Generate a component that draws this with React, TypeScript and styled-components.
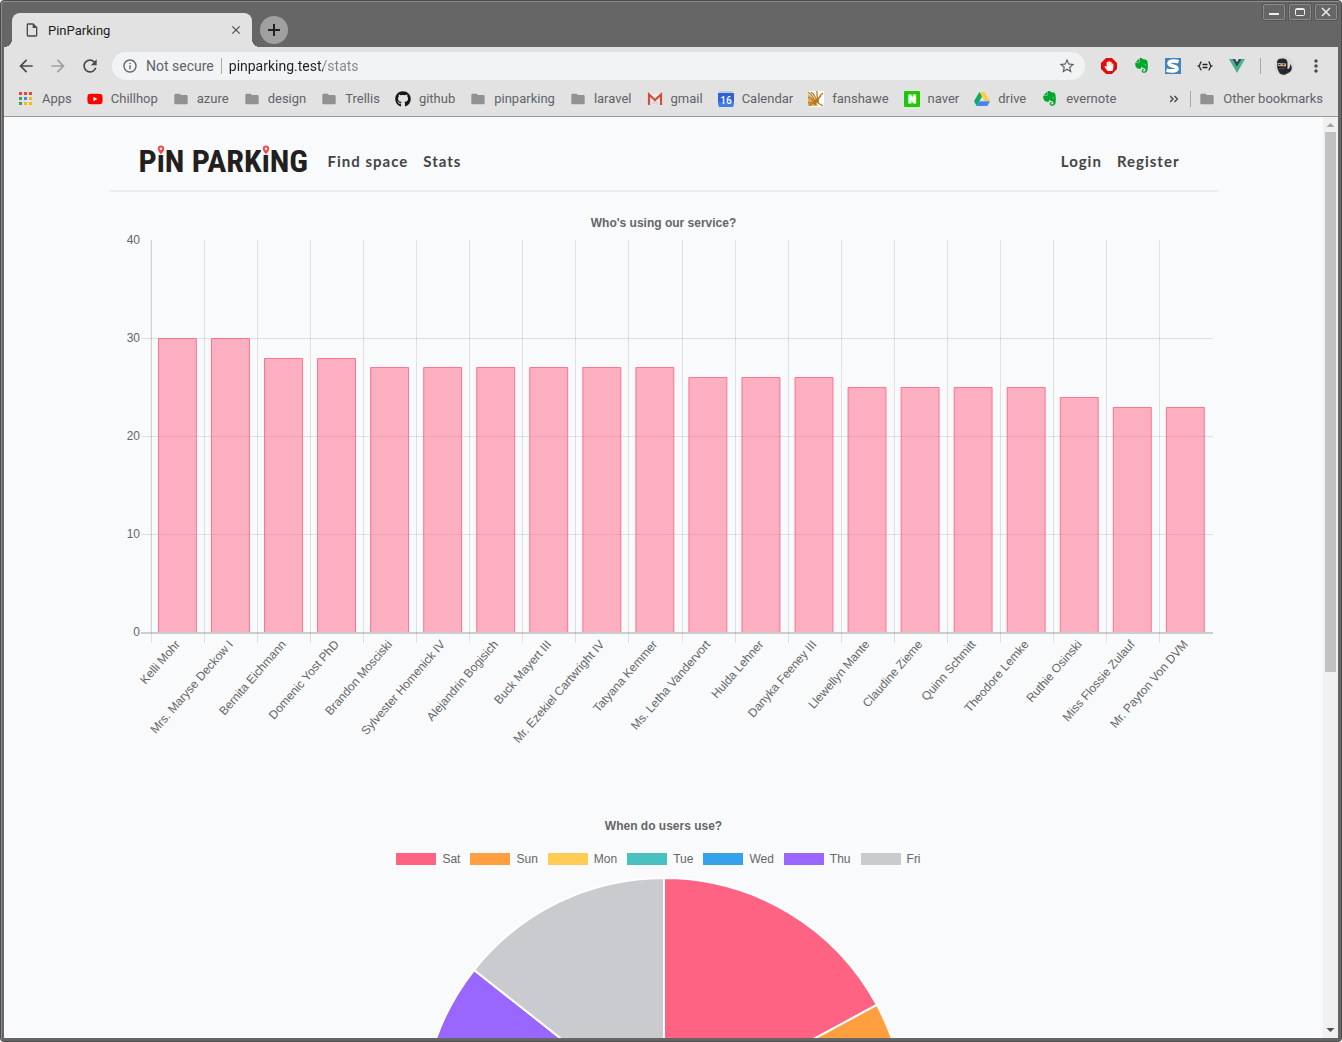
import React from "react";
import styled, { createGlobalStyle } from "styled-components";
import {
  MdArrowBack,
  MdArrowForward,
  MdRefresh,
  MdInfoOutline,
  MdStarBorder,
  MdMoreVert,
  MdFolder,
  MdClose,
  MdOutlineInsertDriveFile,
} from "react-icons/md";
import { FaYoutube, FaGithub, FaEvernote, FaHandPaper } from "react-icons/fa";

const GlobalStyle = createGlobalStyle`
  * { box-sizing: border-box; }
  html, body { margin: 0; background: #fff; }
  body { font-family: Roboto, "Liberation Sans", sans-serif; overflow: hidden; }
  button { border: 0; padding: 0; margin: 0; background: none; font: inherit; color: inherit; }
  a { color: inherit; text-decoration: none; }
  svg { display: block; flex: none; }
`;

/* ---------- window ---------- */

const Window = styled.div`
  height: 100vh;
  display: flex;
  flex-direction: column;
  padding: 3px;
  background: #666;
  border: 1px solid #4c4c4c;
  border-radius: 4px;
  box-shadow: inset 1px 1px 0 #8c8c8c;
`;

const TitleBar = styled.div`
  display: flex;
  height: 43px;
  padding-left: 8px;
  align-items: flex-end;
  flex: none;
`;

const Tab = styled.div`
  position: relative;
  display: flex;
  align-items: center;
  width: 240px;
  height: 34px;
  padding: 0 8px 0 12px;
  border-radius: 8px 8px 0 0;
  background: #e2e2e2;
  color: #222;
  font-size: 13px;
  &::before,
  &::after {
    content: "";
    position: absolute;
    bottom: 0;
    width: 8px;
    height: 8px;
  }
  &::before {
    right: 100%;
    background: radial-gradient(circle at 0 0, transparent 8px, #e2e2e2 8px);
  }
  &::after {
    left: 100%;
    background: radial-gradient(circle at 100% 0, transparent 8px, #e2e2e2 8px);
  }
`;

const TabTitle = styled.span`
  flex: 1;
  padding-left: 8px;
`;

const IconButton = styled.button<{ $size?: number; $color?: string }>`
  display: flex;
  align-items: center;
  justify-content: center;
  flex: none;
  width: ${(p) => p.$size ?? 32}px;
  height: ${(p) => p.$size ?? 32}px;
  color: ${(p) => p.$color ?? "#4a4a4a"};
`;

const NewTab = styled(IconButton)`
  margin: 0 0 3px 8px;
  border-radius: 50%;
  background: #a0a0a0;
`;

const WindowControls = styled.div`
  display: flex;
  gap: 4px;
  margin-left: auto;
  padding-right: 1px;
  align-self: flex-start;
`;

const WindowButton = styled.button`
  display: flex;
  align-items: center;
  justify-content: center;
  width: 22px;
  height: 16px;
  border: 1px solid #8c8c8c;
  border-radius: 2px;
  box-shadow: 0 0 0 1px #555;
`;

/* ---------- toolbar ---------- */

const Toolbar = styled.div`
  display: flex;
  align-items: center;
  flex: none;
  height: 37px;
  padding: 0 6px;
  background: #e2e2e2;
`;

const Omnibox = styled.div`
  display: flex;
  align-items: center;
  flex: 1;
  height: 28px;
  margin: 0 8px 0 6px;
  padding: 0 10px;
  border-radius: 14px;
  background: #f1f3f4;
  font-size: 14px;
`;

const Security = styled.button`
  display: flex;
  align-items: center;
  gap: 8px;
  color: #5f6368;
`;

const Divider = styled.span<{ $gap?: number }>`
  width: 1px;
  height: 16px;
  margin: 0 ${(p) => p.$gap ?? 8}px;
  flex: none;
  background: #a8a8a8;
`;

const AddressInput = styled.input`
  flex: 1;
  min-width: 0;
  padding: 0;
  border: 0;
  outline: 0;
  font: 14px Roboto, "Liberation Sans", sans-serif;
  color: transparent;
  background: linear-gradient(to right, #202124 94px, #80868b 94px);
  background-clip: text;
`;

const Bookmarks = styled.nav`
  display: flex;
  align-items: center;
  flex: none;
  gap: 15px;
  height: 33px;
  padding: 0 15px 3px 14px;
  background: #e2e2e2;
  border-bottom: 1px solid #9a9a9a;
  font-size: 13px;
  color: #5f6368;
`;

const Bookmark = styled.a`
  display: flex;
  align-items: center;
  gap: 8px;
  white-space: nowrap;
`;

const Overflow = styled.div`
  display: flex;
  align-items: center;
  margin-left: auto;
`;

/* ---------- page ---------- */

const Viewport = styled.div`
  display: flex;
  flex: 1;
  min-height: 0;
  background: #f8fafc;
`;

const Page = styled.div`
  flex: 1;
  min-width: 0;
  overflow: hidden;
`;

const Container = styled.div`
  max-width: 1140px;
  margin: 0 auto;
  padding: 0 15px;
`;

const Header = styled.header`
  display: flex;
  align-items: center;
  height: 75px;
  padding: 15px 39px 0 30px;
  border-bottom: 2px solid #ebedef;
`;

const Logo = styled.a`
  width: 165px;
  margin-right: 24px;
  display: flex;
  font: bold 32px / 36px "Roboto Condensed", "Liberation Sans Narrow", "DejaVu Sans Condensed", sans-serif;
  color: #231f20;
  white-space: pre;
`;

const PinLetter = styled.span`
  position: relative;
  svg {
    position: absolute;
    top: 2px;
    left: 50%;
    margin-left: -5px;
  }
`;

const NavLinks = styled.nav`
  display: flex;
  gap: 15px;
  font: bold 15px / 20px Lato, "Open Sans", sans-serif;
  letter-spacing: 1px;
  color: #444;
  &:last-child {
    margin-left: auto;
  }
`;

const Figure = styled.figure<{ $top: number }>`
  margin: ${(p) => p.$top}px 0 0;
  font: 12px / 18px "Liberation Sans", Arial, sans-serif;
  color: #666;
`;

const ChartTitle = styled.figcaption`
  text-align: center;
  font-weight: bold;
`;

const ChartSvg = styled.svg`
  width: 100%;
  height: auto;
  font: 12px "Liberation Sans", Arial, sans-serif;
`;

const Legend = styled.ul`
  display: flex;
  justify-content: center;
  margin: 15px 0 0;
  padding: 0;
  list-style: none;
`;

const LegendItem = styled.li<{ $color: string }>`
  display: flex;
  align-items: center;
  gap: 6px;
  padding-right: 10px;
  &::before {
    content: "";
    width: 40px;
    height: 12px;
    background: ${(p) => p.$color};
  }
`;

const Scrollbar = styled.div`
  display: flex;
  flex-direction: column;
  width: 15px;
  flex: none;
  background: #f1f1f1;
`;

const Track = styled.div`
  flex: 1;
  display: flex;
  flex-direction: column;
  padding: 0 2px;
  &::before {
    content: "";
    flex: 540;
    background: #c1c1c1;
  }
  &::after {
    content: "";
    flex: 351;
  }
`;

/* ---------- icons ---------- */

const AppsIcon = () => {
  const colors = ["#ea4335", "#ea4335", "#ea4335", "#34a853", "#4285f4", "#fbbc05", "#34a853", "#fbbc05", "#fbbc05"];
  return (
    <svg width="16" height="16" viewBox="0 0 16 16">
      {colors.map((c, i) => (
        <rect key={i} x={1 + (i % 3) * 5} y={1 + Math.floor(i / 3) * 5} width="3" height="3" fill={c} />
      ))}
    </svg>
  );
};

const YoutubeIcon = () => (
  <svg width="16" height="16" viewBox="0 0 16 16">
    <rect x="5" y="5" width="7" height="7" fill="#fff" />
    <FaYoutube size={16} color="#f00" />
  </svg>
);

const GmailIcon = () => (
  <svg width="16" height="16" viewBox="0 0 16 16">
    <path d="M1 3h14v11H1z" fill="#eee" />
    <path d="M3 13.5 8 8l5 5.5z" fill="#d8d8d8" />
    <path d="M2 14V3.500l6 5.500 6-5.500V14" fill="none" stroke="#d54b3d" strokeWidth="2.200" />
  </svg>
);

const CalendarIcon = () => (
  <svg width="16" height="16" viewBox="0 0 16 16">
    <path d="M1 0h14v3H1z" fill="#c4c7cc" />
    <path d="M0 2h16v8l-1 6H1L0 10z" fill="#2f62d8" />
    <path d="M0 11h16l-1 5H1z" fill="#3f7de8" />
    <text x="8" y="13" textAnchor="middle" fontSize="10" fontWeight="500" fill="#fff" fontFamily="Roboto">16</text>
  </svg>
);

const FanshaweIcon = () => (
  <svg width="16" height="16" viewBox="0 0 16 16">
    <path d="M0 0h16v16H0z" fill="#fff" />
    <path d="M0 3l6 5 4 7H0z" fill="#dcae68" />
    <path
      d="M0 1c4 3 7 7 8 13M3 1c3 2 5 6 6 11M0 6c3 1 6 4 8 8M0 12c3-1 6 0 8 2M9 0c0 4 0 8 1 12M15 2c-4 3-5 6-5 10M10 12l5 3M1 15l12-10"
      fill="none"
      stroke="#b9771c"
      strokeWidth="1.300"
    />
  </svg>
);

const NaverIcon = () => (
  <svg width="16" height="16" viewBox="0 0 16 16">
    <rect width="16" height="16" rx="1" fill="#1ec800" />
    <text x="8" y="12" textAnchor="middle" fontSize="11" fontWeight="900" fill="#fff" stroke="#fff" fontFamily="Roboto">N</text>
  </svg>
);

const DriveIcon = () => (
  <svg width="16" height="16" viewBox="0 0 16 16">
    <path d="M5.400 1h5.200L16 10.300h-5.200z" fill="#ffcd40" />
    <path d="M5.400 1 8 5.600 2.700 15 0 10.300z" fill="#11a861" />
    <path d="M5.400 10.300H16L13.300 15H2.700z" fill="#4285f4" />
  </svg>
);

const BlockIcon = () => (
  <svg width="16" height="16" viewBox="0 0 16 16">
    <path d="M5 0h6l5 5v6l-5 5H5l-5-5V5z" fill="#e40d0d" />
    <FaHandPaper x={3} y={3} size={10} color="#fff" />
  </svg>
);

const SIcon = () => (
  <svg width="16" height="16" viewBox="0 0 16 16">
    <path d="M0 0h16v16H0z" fill="#4284bd" />
    <path d="M13.500 3.800C10 2.600 4 2.600 4 5.500S12 7.500 12 10.500 5.500 13.200 1.500 12.200" fill="none" stroke="#fff" strokeWidth="3.600" />
  </svg>
);

const BracesIcon = () => (
  <svg width="16" height="16" viewBox="0 0 16 16" fill="none" stroke="#222" strokeWidth="1.300">
    <path d="M4.500 4C2.500 4 4 7.200 1.500 8 4 8.800 2.500 12 4.500 12M11.500 4c2 0 .5 3.200 3 4-2.500.8-1 4-3 4" />
    <path d="M5.500 6.500h5M5.500 9.500h5" />
  </svg>
);

const VueIcon = () => (
  <svg width="16" height="16" viewBox="0 0 16 16">
    <path d="M0 1h3.300L8 9.300 12.700 1H16L8 15z" fill="#41b883" />
    <path d="M3.300 1h2.900L8 4.200 9.800 1h2.900L8 9.300z" fill="#35495e" />
  </svg>
);

const NinjaIcon = () => (
  <svg width="20" height="20" viewBox="0 0 20 20">
    <circle cx="10" cy="10" r="10" fill="#dadada" />
    <path d="M3 7c0-4 3-4.500 6-4.500S13.500 4 13.500 7v6c1.500.5 2.500-2 3-5 2.500 4 1 8-2.500 9-3 3-8 2-9-1-1.500-2-2-5-2-9z" fill="#26272c" />
    <path d="M3.500 7 12 7.500v3L4 10z" fill="#e2b078" />
    <path d="M4.500 8h2v1h-2zM8.500 8.300h2v1h-2z" fill="#222" />
    <path d="M5 13l6-.5" stroke="#4c5058" />
  </svg>
);

const PlusIcon = () => (
  <svg width="12" height="12" viewBox="0 0 12 12">
    <path d="M5 0h2v5h5v2H7v5H5V7H0V5h5z" fill="currentColor" />
  </svg>
);

const Pin = () => (
  <svg width="10" height="11" viewBox="0 0 10 11">
    <path d="M0 0h10v9H0z" fill="#f8fafc" />
    <path d="M5 9.500C3.600 7.500 1.800 5.900 1.800 3.700a3.200 3.200 0 0 1 6.400 0C8.200 5.900 6.400 7.500 5 9.500z" fill="#ef4b50" />
    <circle cx="5" cy="3.700" r="1.200" fill="#f8fafc" />
  </svg>
);

const Arrow = ({ up }: { up?: boolean }) => (
  <svg width="15" height="15" viewBox="0 0 15 15">
    <path d={up ? "M3.500 10h8l-4-4z" : "M3.500 5h8l-4 4z"} fill={up ? "#a3a3a3" : "#505050"} />
  </svg>
);

/* ---------- data ---------- */

const bookmarks: [string, React.ReactNode][] = [
  ["Apps", <AppsIcon />],
  ["Chillhop", <YoutubeIcon />],
  ["azure", "folder"],
  ["design", "folder"],
  ["Trellis", "folder"],
  ["github", <FaGithub size={16} color="#191717" />],
  ["pinparking", "folder"],
  ["laravel", "folder"],
  ["gmail", <GmailIcon />],
  ["Calendar", <CalendarIcon />],
  ["fanshawe", <FanshaweIcon />],
  ["naver", <NaverIcon />],
  ["drive", <DriveIcon />],
  ["evernote", <FaEvernote size={17} color="#00a82d" />],
];

const users: [string, number][] = [
  ["Kelli Mohr", 30],
  ["Mrs. Maryse Deckow I", 30],
  ["Bernita Eichmann", 28],
  ["Domenic Yost PhD", 28],
  ["Brandon Mosciski", 27],
  ["Sylvester Homenick IV", 27],
  ["Alejandrin Bogisich", 27],
  ["Buck Mayert III", 27],
  ["Mr. Ezekiel Cartwright IV", 27],
  ["Tatyana Kemmer", 27],
  ["Ms. Letha Vandervort", 26],
  ["Hulda Lehner", 26],
  ["Danyka Feeney III", 26],
  ["Llewellyn Mante", 25],
  ["Claudine Zieme", 25],
  ["Quinn Schmitt", 25],
  ["Theodore Lemke", 25],
  ["Ruthie Osinski", 24],
  ["Miss Flossie Zulauf", 23],
  ["Mr. Payton Von DVM", 23],
];

/* day, colour, share of the circle in degrees */
const days: [string, string, number][] = [
  ["Sat", "#ff6384", 61.6],
  ["Sun", "#ff9f40", 50],
  ["Mon", "#ffcd56", 49],
  ["Tue", "#4bc0c0", 49],
  ["Wed", "#36a2eb", 49],
  ["Thu", "#9966ff", 49.7],
  ["Fri", "#c9cbcf", 51.7],
];

/* ---------- charts ---------- */

const LEFT = 42;
const RIGHT = 1104;
const TOP = 8;
const BASE = 400;

const BarChart = () => {
  const step = (RIGHT - LEFT - 1) / users.length;
  const y = (v: number) => BASE - (v / 40) * (BASE - TOP);
  return (
    <ChartSvg viewBox="0 0 1110 528" role="img" aria-label="Reservations by user">
      {users.map(([name], i) => {
        const x = Math.round(LEFT + i * step) + 0.5;
        return <line key={name} x1={x} x2={x} y1={TOP} y2={BASE + 11} stroke="#000" strokeOpacity={0.1} />;
      })}
      <line x1={LEFT} x2={LEFT} y1={TOP} y2={BASE} stroke="#000" strokeOpacity={0.1} />
      {[0, 10, 20, 30, 40].map((v) => (
        <React.Fragment key={v}>
          {v > 0 && v < 40 && (
            <line x1={LEFT - 10} x2={RIGHT} y1={y(v) + 0.5} y2={y(v) + 0.5} stroke="#000" strokeOpacity={0.1} />
          )}
          <text x={LEFT - 11} y={y(v) + 4} textAnchor="end" fill="#666">{v}</text>
        </React.Fragment>
      ))}
      {users.map(([name, value], i) => {
        const x = LEFT + i * step + step * 0.14;
        const w = step * 0.715;
        const top = Math.round(y(value)) + 0.5;
        return (
          <g key={name}>
            <rect x={x} y={top} width={w} height={BASE - top} fill="#ff6384" fillOpacity={0.5} />
            <path d={`M${x} ${BASE}V${top}H${x + w}V${BASE}`} fill="none" stroke="#ff6384" strokeOpacity={0.85} />
            <text
              transform={`translate(${LEFT + (i + 0.5) * step} ${BASE + 10}) rotate(-49)`}
              y={4}
              textAnchor="end"
              fill="#666"
            >
              {name}
            </text>
          </g>
        );
      })}
      <line x1={LEFT - 10} x2={RIGHT} y1={BASE + 1} y2={BASE + 1} stroke="#000" strokeWidth={2} strokeOpacity={0.18} />
    </ChartSvg>
  );
};

const PieChart = () => {
  const cx = 555;
  const cy = 252;
  const r = 242;
  const point = (deg: number) => {
    const a = (deg * Math.PI) / 180;
    return `${cx + r * Math.sin(a)} ${cy - r * Math.cos(a)}`;
  };
  let start = 0;
  return (
    <ChartSvg viewBox="0 0 1110 504" role="img" aria-label="Usage by weekday">
      {days.map(([day, color, share]) => {
        const from = start;
        start += share;
        return (
          <path
            key={day}
            d={`M${cx} ${cy}L${point(from)}A${r} ${r} 0 0 1 ${point(start)}Z`}
            fill={color}
            stroke="#fff"
            strokeWidth={2}
            strokeLinejoin="bevel"
          />
        );
      })}
    </ChartSvg>
  );
};

export default function App() {
  return (
    <Window>
      <GlobalStyle />
      <TitleBar>
        <Tab>
          <MdOutlineInsertDriveFile size={16} color="#4a4a4a" />
          <TabTitle>PinParking</TabTitle>
          <IconButton $size={16} aria-label="Close tab"><MdClose size={14} stroke="currentColor" /></IconButton>
        </Tab>
        <NewTab $size={28} $color="#222" aria-label="New tab"><PlusIcon /></NewTab>
        <WindowControls>
          <WindowButton aria-label="Minimize">
            <svg width="12" height="10" viewBox="0 0 12 10"><path d="M1 6h10v2H1z" fill="#eee" /></svg>
          </WindowButton>
          <WindowButton aria-label="Maximize">
            <svg width="12" height="10" viewBox="0 0 12 10">
              <rect x="1.500" y="1.500" width="9" height="7" rx="1" fill="none" stroke="#eee" />
              <path d="M2 2h8v1H2z" fill="#eee" />
            </svg>
          </WindowButton>
          <WindowButton aria-label="Close">
            <svg width="12" height="10" viewBox="0 0 12 10">
              <path d="M2 1l8 8M10 1 2 9" stroke="#eee" strokeWidth="1.500" />
            </svg>
          </WindowButton>
        </WindowControls>
      </TitleBar>

      <Toolbar>
        <IconButton aria-label="Back"><MdArrowBack size={20} /></IconButton>
        <IconButton aria-label="Forward" $color="#a0a0a0"><MdArrowForward size={20} /></IconButton>
        <IconButton aria-label="Reload"><MdRefresh size={20} /></IconButton>
        <Omnibox>
          <Security><MdInfoOutline size={16} />Not secure</Security>
          <Divider $gap={7} />
          <AddressInput aria-label="Address" defaultValue="pinparking.test/stats" />
          <IconButton $size={16} $color="#5f6368" aria-label="Bookmark this page"><MdStarBorder size={18} /></IconButton>
        </Omnibox>
        <IconButton aria-label="Ad blocker"><BlockIcon /></IconButton>
        <IconButton aria-label="Web clipper" $color="#00a82d"><FaEvernote size={17} /></IconButton>
        <IconButton aria-label="Stylish"><SIcon /></IconButton>
        <IconButton aria-label="JSON viewer"><BracesIcon /></IconButton>
        <IconButton aria-label="Vue devtools"><VueIcon /></IconButton>
        <Divider $gap={7} />
        <IconButton aria-label="Profile"><NinjaIcon /></IconButton>
        <IconButton aria-label="Menu"><MdMoreVert size={20} /></IconButton>
      </Toolbar>

      <Bookmarks aria-label="Bookmarks">
        {bookmarks.map(([label, icon]) => (
          <Bookmark key={label} href="#">
            {icon === "folder" ? <MdFolder size={16} color="#919191" /> : icon}
            {label}
          </Bookmark>
        ))}
        <Overflow>
          <IconButton $size={16} aria-label="More bookmarks">
            <svg width="8" height="8" viewBox="0 0 8 8" fill="none" stroke="#4a4a4a" strokeWidth="1.500">
              <path d="M0 1l3 3-3 3M4.500 1l3 3-3 3" />
            </svg>
          </IconButton>
          <Divider $gap={8} />
          <Bookmark href="#">
            <MdFolder size={16} color="#919191" />
            Other bookmarks
          </Bookmark>
        </Overflow>
      </Bookmarks>

      <Viewport>
        <Page>
          <Container>
            <Header>
              <Logo href="#" aria-label="PiN PARKiNG">
                P<PinLetter>i<Pin /></PinLetter>N PARK<PinLetter>i<Pin /></PinLetter>NG
              </Logo>
              <NavLinks>
                <a href="#">Find space</a>
                <a href="#">Stats</a>
              </NavLinks>
              <NavLinks>
                <a href="#">Login</a>
                <a href="#">Register</a>
              </NavLinks>
            </Header>
            <main>
              <Figure $top={22}>
                <ChartTitle>Who's using our service?</ChartTitle>
                <BarChart />
              </Figure>
              <Figure $top={57}>
                <ChartTitle>When do users use?</ChartTitle>
                <Legend>
                  {days.map(([day, color]) => (
                    <LegendItem key={day} $color={color}>{day}</LegendItem>
                  ))}
                </Legend>
                <PieChart />
              </Figure>
            </main>
          </Container>
        </Page>
        <Scrollbar aria-hidden="true">
          <Arrow up />
          <Track />
          <Arrow />
        </Scrollbar>
      </Viewport>
    </Window>
  );
}
